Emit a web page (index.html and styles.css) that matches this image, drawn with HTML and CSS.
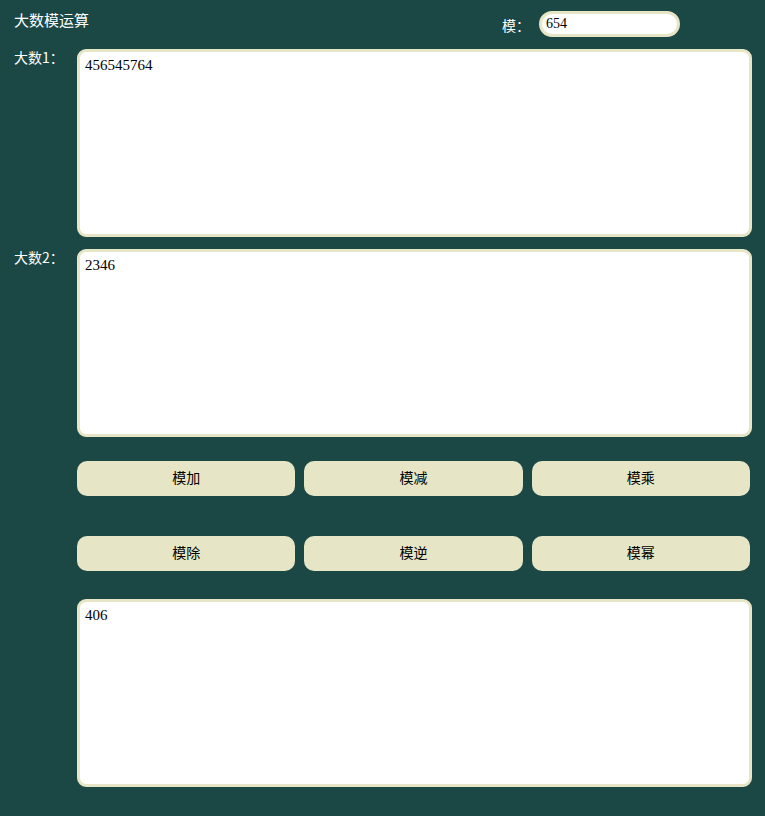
FILE: index.html
```html
<!DOCTYPE html>
<html lang="zh">
<head>
    <meta charset="UTF-8">
    <title>大数模运算</title>
    <link rel="stylesheet" href="styles.css">
</head>
<body>
    <div class="page">
        <div class="top">
            <span class="title">大数模运算</span>
            <div class="mod">
                <label for="mod">模：</label>
                <input type="text" id="mod" class="mod-input" value="654">
            </div>
        </div>

        <div class="row">
            <label class="side" for="num1">大数1：</label>
            <textarea id="num1" class="box">456545764</textarea>
        </div>

        <div class="row">
            <label class="side" for="num2">大数2：</label>
            <textarea id="num2" class="box">2346</textarea>
        </div>

        <div class="buttons">
            <button type="button">模加</button>
            <button type="button">模减</button>
            <button type="button">模乘</button>
            <button type="button">模除</button>
            <button type="button">模逆</button>
            <button type="button">模幂</button>
        </div>

        <div class="row result">
            <span class="side"></span>
            <textarea id="result" class="box">406</textarea>
        </div>
    </div>
</body>
</html>
```

FILE: styles.css
```css
* {
    margin: 0;
    padding: 0;
    box-sizing: border-box;
}

body {
    background-color: #1b4745;
    font-family: "Noto Sans CJK SC", "Noto Sans", sans-serif;
    color: #fff;
    width: 765px;
    height: 816px;
    overflow: hidden;
}

.page {
    padding: 0 13px 0 14px;
}

.top {
    display: flex;
    align-items: flex-start;
    height: 49px;
    padding-top: 11px;
}

.title {
    font-size: 15px;
    line-height: 20px;
    margin-top: -1px;
}

.mod {
    display: flex;
    align-items: center;
    margin-left: auto;
    margin-right: 72px;
}

.mod label {
    font-size: 14px;
    width: 37px;
    padding-top: 1px;
}

.mod-input {
    width: 141px;
    height: 26px;
    border: 3px solid #e6e6c6;
    border-radius: 13px;
    padding: 0 4px;
    font-family: "Liberation Serif", serif;
    font-size: 14px;
    color: #000;
    outline: none;
}

.row {
    display: grid;
    grid-template-columns: 63px 1fr;
    margin-bottom: 12px;
}

.side {
    font-size: 14px;
    line-height: 18px;
    margin-top: -1px;
}

.box {
    height: 188px;
    border: 3px solid #e6e6c6;
    border-radius: 9px;
    padding: 5px;
    font-family: "Liberation Serif", serif;
    font-size: 15px;
    line-height: 17px;
    color: #000;
    background: #fff;
    resize: none;
    outline: none;
}

.buttons {
    display: grid;
    grid-template-columns: repeat(3, 1fr);
    column-gap: 9px;
    row-gap: 40px;
    margin: 24px 2px 28px 63px;
}

.buttons button {
    height: 35px;
    padding-bottom: 3px;
    border: none;
    border-radius: 10px;
    background-color: #e6e6c6;
    color: #000;
    font-family: "Noto Sans CJK SC", sans-serif;
    font-size: 14px;
}
```
